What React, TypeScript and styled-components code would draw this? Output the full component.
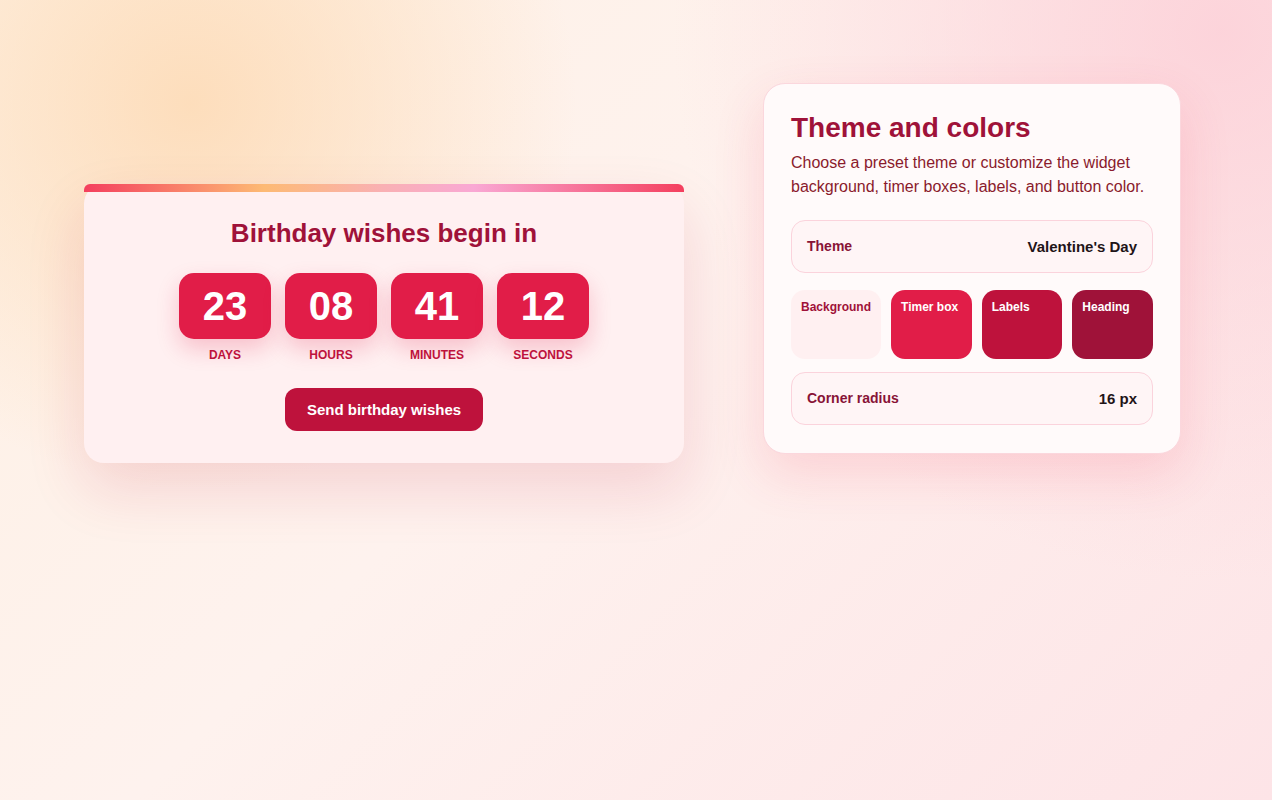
import styled, { createGlobalStyle } from "styled-components";

const GlobalStyle = createGlobalStyle`
    html, body {
        margin: 0;
        min-height: 100%;
    }
    body {
        font-family: "Liberation Sans", Arial, sans-serif;
        background:
            radial-gradient(circle at 15% 13%, rgba(253, 218, 180, 0.85), rgba(253, 218, 180, 0) 30%),
            radial-gradient(circle at 96% 4%, rgba(252, 205, 214, 0.8), rgba(252, 205, 214, 0) 38%),
            linear-gradient(135deg, #fef1e4 0%, #fef2ee 45%, #fde4e7 100%);
        background-attachment: fixed;
    }
`;

type Unit = { value: string; label: string };

const units: Unit[] = [
    { value: "23", label: "Days" },
    { value: "08", label: "Hours" },
    { value: "41", label: "Minutes" },
    { value: "12", label: "Seconds" },
];

type Swatch = { name: string; bg: string; fg: string };

const swatches: Swatch[] = [
    { name: "Background", bg: "#fff0f1", fg: "#9f1239" },
    { name: "Timer box", bg: "#e11d48", fg: "#ffffff" },
    { name: "Labels", bg: "#be123c", fg: "#ffffff" },
    { name: "Heading", bg: "#9f1239", fg: "#ffffff" },
];

export default function App() {
    return (
        <>
            <GlobalStyle />
            <PageStl>
                <StageStl>
                    <CardStl>
                        <CardTitleStl>Birthday wishes begin in</CardTitleStl>
                        <TimerRowStl>
                            {units.map((u) => (
                                <UnitStl key={u.label}>
                                    <BoxStl>{u.value}</BoxStl>
                                    <UnitLabelStl>{u.label}</UnitLabelStl>
                                </UnitStl>
                            ))}
                        </TimerRowStl>
                        <ButtonStl type="button">Send birthday wishes</ButtonStl>
                    </CardStl>
                </StageStl>

                <PanelStl>
                    <PanelTitleStl>Theme and colors</PanelTitleStl>
                    <PanelTextStl>
                        Choose a preset theme or customize the widget background, timer boxes, labels, and button color.
                    </PanelTextStl>
                    <FieldStl>
                        <FieldLabelStl>Theme</FieldLabelStl>
                        <FieldValueStl>Valentine's Day</FieldValueStl>
                    </FieldStl>
                    <SwatchGridStl>
                        {swatches.map((s) => (
                            <SwatchStl key={s.name} $bg={s.bg} $fg={s.fg}>
                                {s.name}
                            </SwatchStl>
                        ))}
                    </SwatchGridStl>
                    <FieldStl>
                        <FieldLabelStl>Corner radius</FieldLabelStl>
                        <FieldValueStl>16 px</FieldValueStl>
                    </FieldStl>
                </PanelStl>
            </PageStl>
        </>
    );
}

const PageStl = styled.main`
    display: grid;
    grid-template-columns: 600px 418px;
    column-gap: 79px;
    align-items: start;
    padding: 83px 0 0 84px;
`;

const StageStl = styled.section`
    display: flex;
    align-items: center;
    min-height: 481px;
`;

const CardStl = styled.div`
    position: relative;
    width: 100%;
    box-sizing: border-box;
    display: flex;
    flex-direction: column;
    align-items: center;
    padding: 32px 24px 32px;
    border-radius: 20px;
    background: #fff0f1;
    box-shadow: 0 26px 60px rgba(190, 18, 60, 0.14);

    /* gradient ribbon laid over the top edge */
    &::before {
        content: "";
        position: absolute;
        top: 0;
        left: 0;
        right: 0;
        height: 8px;
        border-radius: 6px 6px 0 0;
        background: linear-gradient(90deg, #f43f5e 0%, #fdba74 30%, #f9b0b4 50%, #f9a8d4 65%, #f43f5e 100%);
    }
`;

const CardTitleStl = styled.h2`
    margin: 0;
    font-size: 26px;
    line-height: 34px;
    font-weight: 700;
    color: #9f1239;
`;

const TimerRowStl = styled.div`
    display: flex;
    gap: 14px;
    margin-top: 23px;
`;

const UnitStl = styled.div`
    display: flex;
    flex-direction: column;
    align-items: center;
`;

const BoxStl = styled.div`
    width: 92px;
    height: 66px;
    display: flex;
    align-items: center;
    justify-content: center;
    border-radius: 15px;
    background: #e11d48;
    color: #ffffff;
    font-size: 40px;
    font-weight: 700;
    box-shadow: 0 10px 22px rgba(225, 29, 72, 0.22);
`;

const UnitLabelStl = styled.span`
    margin-top: 9px;
    font-size: 12px;
    line-height: 14px;
    font-weight: 700;
    text-transform: uppercase;
    color: #be123c;
`;

const ButtonStl = styled.button`
    margin-top: 26px;
    padding: 12px 22px;
    border: none;
    border-radius: 12px;
    background: #be123c;
    color: #ffffff;
    font-family: inherit;
    font-size: 15px;
    line-height: 19px;
    font-weight: 700;
    cursor: pointer;
`;

const PanelStl = styled.aside`
    box-sizing: border-box;
    padding: 28px 27px;
    border: 1px solid #fbd7dd;
    border-radius: 22px;
    background: #fffafa;
    box-shadow: 0 20px 50px rgba(244, 63, 94, 0.16);
`;

const PanelTitleStl = styled.h2`
    margin: 0;
    font-size: 28px;
    line-height: 32px;
    font-weight: 700;
    color: #9f1239;
`;

const PanelTextStl = styled.p`
    margin: 7px 0 21px;
    font-size: 16px;
    line-height: 24px;
    color: #8a1a2c;
`;

const FieldStl = styled.div`
    display: flex;
    align-items: center;
    justify-content: space-between;
    padding: 16px 15px;
    border: 1px solid #fbd3dc;
    border-radius: 14px;
    background: #fff5f6;
`;

const FieldLabelStl = styled.span`
    font-size: 14px;
    line-height: 19px;
    font-weight: 700;
    color: #881337;
`;

const FieldValueStl = styled.span`
    font-size: 15px;
    line-height: 19px;
    font-weight: 700;
    color: #1f1418;
`;

const SwatchGridStl = styled.div`
    display: grid;
    grid-template-columns: repeat(4, 1fr);
    gap: 10px;
    margin: 17px 0 13px;
`;

const SwatchStl = styled.div<{ $bg: string; $fg: string }>`
    height: 69px;
    box-sizing: border-box;
    padding: 10px;
    border-radius: 14px;
    background: ${(p) => p.$bg};
    color: ${(p) => p.$fg};
    font-size: 12px;
    line-height: 14px;
    font-weight: 700;
    white-space: nowrap;
`;
